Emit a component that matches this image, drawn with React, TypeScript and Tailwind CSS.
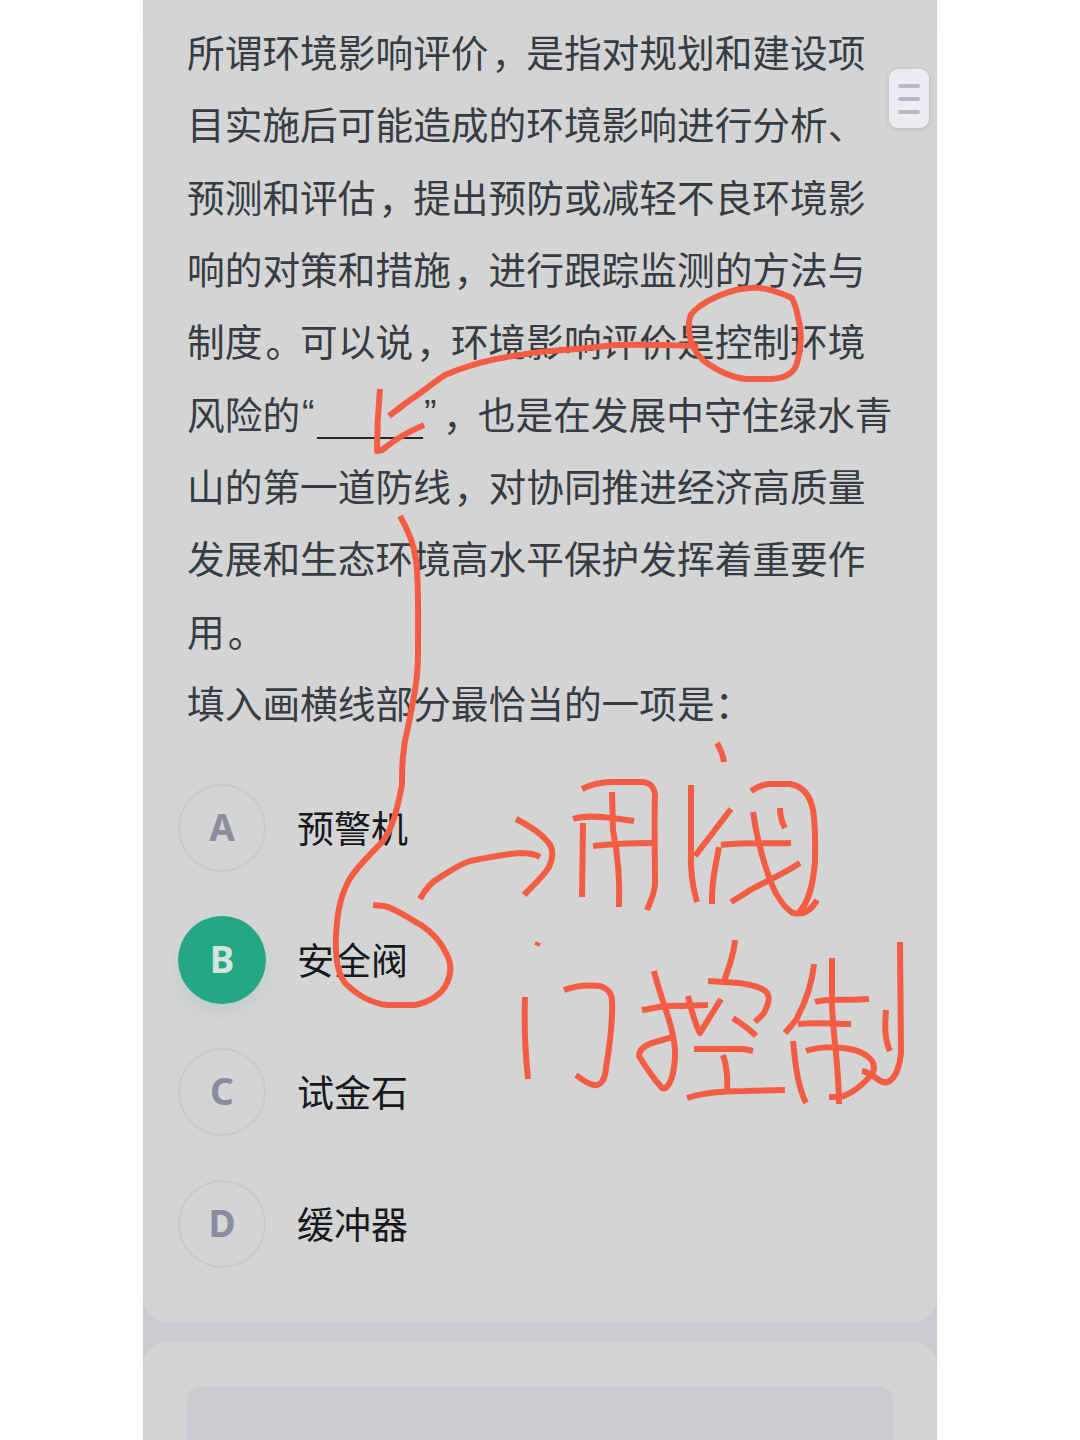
const LINES_BEFORE = [
  '所谓环境影响评价，是指对规划和建设项',
  '目实施后可能造成的环境影响进行分析、',
  '预测和评估，提出预防或减轻不良环境影',
  '响的对策和措施，进行跟踪监测的方法与',
  '制度。可以说，环境影响评价是控制环境',
];

const LINES_AFTER = [
  '山的第一道防线，对协同推进经济高质量',
  '发展和生态环境高水平保护发挥着重要作',
  '用。',
  '填入画横线部分最恰当的一项是：',
];

const OPTIONS = [
  { key: 'A', text: '预警机', selected: false },
  { key: 'B', text: '安全阀', selected: true },
  { key: 'C', text: '试金石', selected: false },
  { key: 'D', text: '缓冲器', selected: false },
];

// Freehand pen strokes in page coordinates.
const STROKES = [
  // circle around the keyword and the arrow leading to the blank
  'M793 299 L790 297 C775 291 765 287 750 288 C730 289 710 299 700 306 C691 313 689 316 689 323 C688 340 694 352 704 361 C718 371 733 378 746 379 L772 379 C785 378 794 374 797 363 C801 350 802 332 799 322 C797 311 795 302 791 297',
  'M698 346 C670 345 640 344 615 345 C590 348 565 350 540 352 C510 356 480 360 445 375 C430 385 420 394 410 400 L389 416',
  'M380 389 C378 410 377 430 377 451 L382 450 C395 440 405 433 424 425',
  // long curve down to the chosen answer
  'M400 516 C408 530 414 543 416 560 C419 580 418 620 418 655 C418 680 413 702 408 727 C402 750 402 770 402 785 C397 810 393 827 383 841 C370 855 355 868 348 882 C339 900 337 917 336 935 C335 960 338 973 345 983 C355 993 370 1003 387 1005 L415 1005 C430 1002 442 994 447 983 C453 970 450 960 446 953 C440 940 430 931 421 925 C408 918 395 908 384 906 L373 905',
  // arrow to the handwritten note
  'M420 899 C425 890 431 882 439 878 C450 871 460 864 470 861 C485 858 505 854 520 853 C530 853 535 854 540 857',
  'M516 819 C530 826 540 832 548 842 C554 849 553 858 549 867 C543 877 534 884 524 895',
  // yong
  'M582 789 C592 784 602 782 612 782 L643 782 C650 783 654 786 655 795 C654 825 655 855 655 885 C654 895 650 902 647 910',
  'M573 819 C585 815 600 817 612 818 L634 821',
  'M583 823 L582 897',
  'M612 792 L613 830 C618 855 620 880 619 907',
  'M593 846 C610 844 630 843 654 843',
  // fa
  'M717 743 C721 750 723 755 724 762',
  'M691 785 L691 850 C690 870 692 885 697 902',
  'M731 809 L695 856',
  'M719 847 C716 865 711 880 712 904',
  'M721 845 C740 842 765 844 791 843',
  'M753 812 C757 840 763 862 772 885 C777 898 787 910 793 913 C803 915 811 911 817 900',
  'M780 808 C780 815 781 821 785 828',
  'M800 863 C785 873 765 882 750 890 C743 895 738 898 731 902',
  'M751 791 C757 787 763 784 770 784 L790 784 C803 786 810 795 813 810 C816 828 815 845 815 862 C813 885 809 902 799 912',
  // men
  'M525 997 C524 1025 525 1050 528 1079',
  'M564 990 C577 985 590 985 600 986 C609 989 612 994 612 1001 C613 1025 609 1050 606 1068 C605 1082 599 1086 594 1085 C588 1084 581 1079 576 1075',
  // kong
  'M654 971 C657 985 663 1000 669 1020 C675 1040 677 1055 673 1073 C671 1083 666 1090 662 1088 C655 1080 645 1066 639 1056 C639 1046 650 1043 673 1037',
  'M642 1010 C655 1008 665 1005 680 1006 L708 1005',
  'M688 996 C691 1008 694 1022 700 1033 L721 999',
  'M735 940 C734 955 728 970 723 984',
  'M708 981 C725 982 745 982 760 988 C773 993 769 1003 764 1013 L755 1022',
  'M733 1018 C742 1024 750 1029 756 1036',
  'M694 1049 L744 1049 L753 1051',
  'M723 1055 C727 1067 728 1078 727 1091',
  'M687 1098 C705 1092 725 1091 745 1091 L785 1090',
  // zhi
  'M814 964 C812 985 804 1005 796 1020 L785 1033',
  'M793 1041 C795 1060 797 1085 806 1103',
  'M832 958 L832 1000 C832 1030 839 1065 839 1104',
  'M815 1002 C825 998 845 1001 869 999',
  'M798 1024 C815 1022 830 1024 851 1024',
  'M806 1051 C820 1046 840 1047 850 1049 C868 1053 877 1062 873 1072 C866 1083 850 1095 840 1097 L829 1097',
  'M886 1010 C885 1025 884 1038 890 1051',
  'M900 942 L901 1053 C900 1065 896 1078 888 1082 C880 1085 874 1073 862 1071',
];

// Nudges commas and full stops towards the middle of their em box.
function Phrase({ text }: { text: string }) {
  return (
    <span>
      {text.split(/([，。])/).map((part, i) =>
        part === '，' || part === '。' ? (
          <span key={i} className="inline-block translate-x-[3px] translate-y-px">
            {part}
          </span>
        ) : (
          part
        ),
      )}
    </span>
  );
}

function Line({ text }: { text: string }) {
  return (
    <p className="h-[72.33px] whitespace-nowrap">
      <Phrase text={text} />
    </p>
  );
}

export default function App() {
  return (
    <div className="relative flex h-[1440px] w-[1080px] justify-center overflow-hidden bg-white font-['Noto_Sans_CJK_SC',sans-serif]">
      <main className="flex w-[794px] flex-col gap-[20px] bg-[#caccd0]">
        <section className="h-[1322px] shrink-0 rounded-b-[26px] bg-[#d4d4d4] bg-linear-to-b from-[#d2d3d3] to-[#d4d4d4] to-3% pl-[44px] pt-[15px]">
          <div className="text-[37.7px] leading-[72.33px] text-[#363c42]">
            {LINES_BEFORE.map((text) => (
              <Line key={text} text={text} />
            ))}
            <p className="flex h-[72.33px] whitespace-nowrap">
              <span>风险的</span>
              <span className="w-[17px] pl-[2px] font-['Liberation_Sans',sans-serif]">“</span>
              <span className="mt-[60px] h-[2px] w-[106px] bg-[#24282c]" />
              <span className="w-[17px] pl-[1px] font-['Liberation_Sans',sans-serif]">”</span>
              <Phrase text="，也是在发展中守住绿水青" />
            </p>
            {LINES_AFTER.map((text) => (
              <Line key={text} text={text} />
            ))}
          </div>

          <ul className="-ml-[9px] mt-[46px] flex flex-col gap-[44px]">
            {OPTIONS.map((option) => (
              <li key={option.key} className="flex h-[88px] items-center gap-[31px]">
                <span
                  className={
                    option.selected
                      ? "flex size-[88px] items-center justify-center rounded-full bg-[#25a786] pb-[4px] font-['Noto_Sans',sans-serif] text-[37px] font-bold text-[#d5e3de] shadow-[0_10px_14px_rgba(37,167,134,0.1)]"
                      : "flex size-[88px] items-center justify-center rounded-full border-2 border-[#c6cccb] pb-[3px] font-['Noto_Sans',sans-serif] text-[37px] font-bold text-[#8b8c9f]"
                  }
                >
                  {option.key}
                </span>
                <span className="-mt-[3px] text-[37px] leading-[72px] text-[#16191c]">{option.text}</span>
              </li>
            ))}
          </ul>
        </section>

        <section className="h-[98px] shrink-0 rounded-t-[26px] bg-[#d4d4d4] px-[44px] pt-[44px]">
          <div className="h-full rounded-t-[14px] bg-[#cacbcf]" />
        </section>
      </main>

      <button
        aria-label="menu"
        className="absolute left-[889px] top-[69px] flex h-[59px] w-[40px] flex-col items-center justify-center gap-[9px] rounded-[9px] bg-[#ededf1] shadow-[0_1px_5px_rgba(0,0,0,0.14)]"
      >
        <span className="h-[4px] w-[22px] rounded-full bg-[#b8b9c4]" />
        <span className="h-[4px] w-[22px] rounded-full bg-[#b4b8ca]" />
        <span className="h-[4px] w-[22px] rounded-full bg-[#b8b9c4]" />
      </button>

      <svg
        className="pointer-events-none absolute inset-0"
        width="1080"
        height="1440"
        viewBox="0 0 1080 1440"
        fill="none"
        stroke="#f45d43"
        strokeWidth="6"
        strokeLinejoin="round"
      >
        {STROKES.map((d) => (
          <path key={d} d={d} />
        ))}
        <path d="M535 943 L540 945" strokeWidth="4" />
      </svg>
    </div>
  );
}
